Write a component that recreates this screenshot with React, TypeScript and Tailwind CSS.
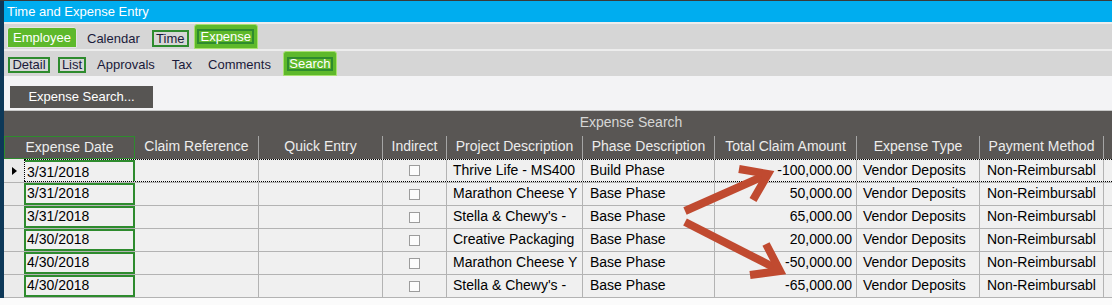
import React from 'react';

const rows = [
  { date: '3/31/2018', project: 'Thrive Life - MS400', phase: 'Build Phase', amount: '-100,000.00' },
  { date: '3/31/2018', project: 'Marathon Cheese Y', phase: 'Base Phase', amount: '50,000.00' },
  { date: '3/31/2018', project: "Stella & Chewy's -", phase: 'Base Phase', amount: '65,000.00' },
  { date: '4/30/2018', project: 'Creative Packaging', phase: 'Base Phase', amount: '20,000.00' },
  { date: '4/30/2018', project: 'Marathon Cheese Y', phase: 'Base Phase', amount: '-50,000.00' },
  { date: '4/30/2018', project: "Stella & Chewy's -", phase: 'Base Phase', amount: '-65,000.00' },
];

const headers = [
  { title: 'Claim Reference', w: 'w-[124px]' },
  { title: 'Quick Entry', w: 'w-[124px]' },
  { title: 'Indirect', w: 'w-[64px]' },
  { title: 'Project Description', w: 'w-[136px]' },
  { title: 'Phase Description', w: 'w-[132px]' },
  { title: 'Total Claim Amount', w: 'w-[142px]' },
  { title: 'Expense Type', w: 'w-[123px]' },
  { title: 'Payment Method', w: 'w-[124px]' },
];

function RowCells({ row }: { row: (typeof rows)[number] }) {
  const cell = 'h-full shrink-0 border-r border-[#b3b3b3] overflow-hidden whitespace-nowrap';
  return (
    <>
      <div className={`${cell} w-[124px]`} />
      <div className={`${cell} w-[124px]`} />
      <div className={`${cell} w-[64px] flex items-center justify-center`}>
        <span className="block w-[11px] h-[11px] border border-[#9c9c9c] bg-[#fcfcfc]" />
      </div>
      <div className={`${cell} w-[136px] pl-[6px]`}>{row.project}</div>
      <div className={`${cell} w-[132px] pl-[7px]`}>{row.phase}</div>
      <div className={`${cell} w-[142px] pr-[4px] text-right`}>{row.amount}</div>
      <div className={`${cell} w-[123px] pl-[6px]`}>Vendor Deposits</div>
      <div className={`${cell} w-[124px] pl-[7px]`}>Non-Reimbursabl</div>
      <div className="h-full w-[154px] shrink-0" />
    </>
  );
}

export default function App() {
  return (
    <div className="relative w-[1112px] h-[305px] overflow-hidden bg-[#fbfbfb] font-['Liberation_Sans',Arial,sans-serif]">
      <div className="h-px bg-[#3a3a3a]" />
      <div className="flex">
        <div className="w-[4px] shrink-0 bg-[#0d3858]" />
        <div className="flex-1 min-w-0 flex flex-col overflow-hidden">
          {/* Title */}
          <div className="h-[21px] bg-[#00adef] pl-[3px] text-[13px] leading-[22px] text-white">
            Time and Expense Entry
          </div>
          <div className="h-[2px] bg-[#ededed]" />

          {/* Top tabs */}
          <div className="h-[25px] bg-[#d6d6d6] flex items-end text-[13px] text-[#1a1a3a]">
            <div className="ml-[3px] mb-[1px] h-[21px] w-[70px] rounded-t-[3px] border border-[#e4e4e4] bg-[#5eb92b] text-white flex items-center justify-center pt-px">
              Employee
            </div>
            <span className="ml-[10px] mb-[2px] leading-[17px]">Calendar</span>
            <span className="ml-[12px] mb-[2px] h-[17px] w-[37px] border-2 border-[#2e8b2e] text-center leading-[13px]">
              Time
            </span>
            <div className="ml-[5px] h-[25px] w-[64px] rounded-t-[3px] border border-[#a8e070] bg-[#5eb92b] flex items-center justify-center">
              <span className="h-[15px] w-[57px] border-2 border-[#2e8b2e] text-center leading-[11px] text-white">
                Expense
              </span>
            </div>
          </div>
          <div className="h-[2px] bg-[#ededed]" />

          {/* Sub tabs */}
          <div className="h-[25px] bg-[#d6d6d6] flex items-end text-[13px] text-[#1a1a3a]">
            <span className="ml-[4px] mb-[3px] h-[16px] w-[42px] border-2 border-[#2e8b2e] text-center leading-[12px]">
              Detail
            </span>
            <span className="ml-[8px] mb-[3px] h-[16px] w-[28px] border-2 border-[#2e8b2e] text-center leading-[12px]">
              List
            </span>
            <span className="ml-[11px] mb-[3px] leading-[17px]">Approvals</span>
            <span className="ml-[17px] mb-[3px] leading-[17px]">Tax</span>
            <span className="ml-[16px] mb-[3px] leading-[17px]">Comments</span>
            <div className="ml-[12px] h-[25px] w-[54px] rounded-t-[3px] border border-[#a8e070] bg-[#5eb92b] flex items-center justify-center">
              <span className="h-[14px] w-[46px] border-2 border-[#2e8b2e] text-center leading-[10px] text-white">
                Search
              </span>
            </div>
          </div>

          {/* Toolbar */}
          <div className="h-[35px] bg-[#f3f3f5] pt-[8px] pl-[6px] border-b border-[#c8c8c8]">
            <button className="h-[22px] w-[143px] bg-[#575553] text-[13px] leading-[22px] text-white">
              Expense Search...
            </button>
          </div>

          {/* Grid */}
          <div className="w-[1254px] shrink-0 text-[14px] leading-[20px]">
            <div className="h-[25px] bg-[#595654] text-center text-[#d6d6d6] leading-[22px]">Expense Search</div>
            <div className="flex h-[23px] bg-[#595654] text-[#ececec]">
              <div className="w-[131px] shrink-0 border border-[#2e8b2e] text-center leading-[20px]">Expense Date</div>
              {headers.map((h) => (
                <div key={h.title} className={`${h.w} shrink-0 border-r border-[#a5a5a5] text-center whitespace-nowrap overflow-hidden`}>
                  {h.title}
                </div>
              ))}
              <div className="w-[154px] shrink-0" />
            </div>

            {rows.map((row, i) =>
              i === 0 ? (
                <div key={i} className="flex h-[23px] bg-[#f0f0f0] text-black">
                  <div className="w-[20px] shrink-0 bg-[#ebebeb] flex items-center pl-[8px]">
                    <svg width="5" height="8" viewBox="0 0 5 8">
                      <polygon points="0,0 5,4 0,8" fill="#000" />
                    </svg>
                  </div>
                  <div className="flex flex-1 border-y border-dotted border-black">
                    <div className="w-[111px] shrink-0 border-l border-dotted border-black">
                      <div className="h-full border-t-2 border-r-2 border-[#2e8b2e] pl-[2px]">{row.date}</div>
                    </div>
                    <RowCells row={row} />
                  </div>
                </div>
              ) : (
                <div key={i} className={`flex h-[23px] bg-[#f0f0f0] text-black border-t border-[#b3b3b3] ${i === rows.length - 1 ? 'h-[24px] border-b' : ''}`}>
                  <div className="w-[20px] shrink-0 bg-[#ebebeb]" />
                  <div className="w-[111px] shrink-0">
                    <div className="h-[22px] border-2 border-[#2e8b2e] pl-px leading-[16px]">{row.date}</div>
                  </div>
                  <RowCells row={row} />
                </div>
              )
            )}
          </div>
        </div>
      </div>

      {/* Annotation arrows */}
      <svg className="absolute left-0 top-0 pointer-events-none" width="1112" height="305" viewBox="0 0 1112 305">
        <g fill="none" stroke="#c04a30" strokeWidth="8" strokeLinejoin="miter" strokeLinecap="butt">
          <line x1="685" y1="211" x2="766" y2="175" />
          <polyline points="739,169 768,174 753,200" />
          <line x1="685" y1="222" x2="777" y2="269" />
          <polyline points="766,244 780,271 750,275" />
        </g>
      </svg>
    </div>
  );
}
